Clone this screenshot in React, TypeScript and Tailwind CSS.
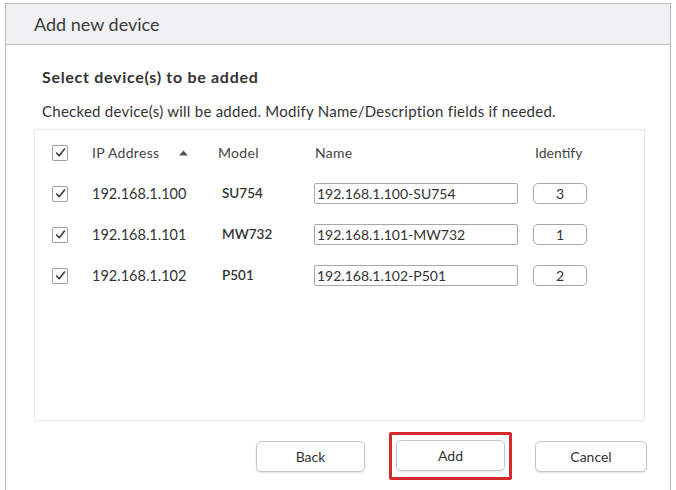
import React from 'react';

interface Device {
  ip: string;
  model: string;
  name: string;
  identify: string;
}

const devices: Device[] = [
  { ip: '192.168.1.100', model: 'SU754', name: '192.168.1.100-SU754', identify: '3' },
  { ip: '192.168.1.101', model: 'MW732', name: '192.168.1.101-MW732', identify: '1' },
  { ip: '192.168.1.102', model: 'P501', name: '192.168.1.102-P501', identify: '2' },
];

const CheckBox: React.FC = () => (
  <div className="w-[16px] h-[16px] border border-[#a0a0a0] rounded-[2px] bg-white flex items-center justify-center">
    <svg width="11" height="11" viewBox="0 0 11 11" fill="none">
      <path d="M1.6 6 L4.2 8.7 L9.5 2" stroke="#3a3a3a" strokeWidth="1.6" strokeLinecap="round" strokeLinejoin="round" />
    </svg>
  </div>
);

const FooterButton: React.FC<{ label: string; width: string }> = ({ label, width }) => (
  <button className={`${width} h-[31px] bg-white border border-[#c8c8c8] rounded-[5px] shadow-[0_1px_2px_rgba(0,0,0,0.12)] text-[14px] text-[#333]`}>
    {label}
  </button>
);

const cols = 'grid grid-cols-[40px_126px_96px_219px_80px] items-center h-[41px]';

const App: React.FC = () => {
  return (
    <div className="w-[676px] h-[490px] bg-white pt-[3px] px-[5px] overflow-hidden" style={{ fontFamily: 'Lato, "Open Sans", sans-serif' }}>
      <div className="h-[487px] border-l border-r border-t border-[#b9b9b9] flex flex-col">
        <div className="h-[41px] bg-[#f1f1f4] border-b border-[#c4c4c4] flex items-center pl-[28px]">
          <span className="text-[18px] text-[#3a3a3a]">Add new device</span>
        </div>

        <div className="flex-1 pl-[28px] pr-[23px] pt-[22px]">
          <div className="pl-[8px] text-[16px] tracking-[0.7px] font-bold text-[#333] leading-[20px]">Select device(s) to be added</div>
          <div className="pl-[8px] mt-[14px] text-[15px] tracking-[0.25px] text-[#333] leading-[20px]">
            Checked device(s) will be added. Modify Name/Description fields if needed.
          </div>

          <div className="mt-[8px] mr-[2px] h-[292px] border border-[#e6e6e6] rounded-[2px] pt-[2px] pl-[17px]">
            <div className={`${cols} text-[14px] tracking-[0.3px] text-[#444]`}>
              <CheckBox />
              <div className="flex items-center">
                <span>IP Address</span>
                <svg className="ml-[20px]" width="9" height="6" viewBox="0 0 9 6">
                  <path d="M0 5.5 L4.5 0.5 L9 5.5 Z" fill="#555" />
                </svg>
              </div>
              <span>Model</span>
              <span className="pl-[1px]">Name</span>
              <span className="pl-[2px] tracking-normal">Identify</span>
            </div>

            {devices.map((d) => (
              <div key={d.ip} className={`${cols} text-[14px] text-[#333]`}>
                <CheckBox />
                <span className="text-[14.5px]">{d.ip}</span>
                <span className="pl-[4px] text-[13.5px] font-semibold">{d.model}</span>
                <div className="w-[204px] h-[21px] border border-[#a8a8a8] rounded-[2px] flex items-center pl-[2px]">
                  {d.name}
                </div>
                <div className="w-[54px] h-[21px] border border-[#a8a8a8] rounded-[5px] flex items-center justify-center">
                  {d.identify}
                </div>
              </div>
            ))}
          </div>

          <div className="flex justify-end items-center mt-[11px]">
            <FooterButton label="Back" width="w-[109px]" />
            <div className="ml-[24px] pt-[5px] pb-[6px] px-[4px] border-[3px] border-[#d42a2a] rounded-[2px]">
              <FooterButton label="Add" width="w-[109px]" />
            </div>
            <div className="ml-[23px]">
              <FooterButton label="Cancel" width="w-[112px]" />
            </div>
          </div>
        </div>
      </div>
    </div>
  );
};

export default App;
